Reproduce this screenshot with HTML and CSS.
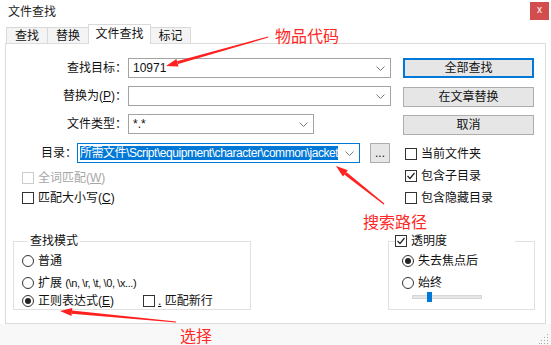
FILE: index.html
```html
<!DOCTYPE html>
<html>
<head>
<meta charset="utf-8">
<title>文件查找</title>
<link rel="stylesheet" href="styles.css">
</head>
<body>
<div class="dialog">
  <div class="titlebar">
    <span class="title">文件查找</span>
    <span class="close">x</span>
  </div>
  <div class="tabs">
    <span class="tab w41">查找</span>
    <span class="tab w41">替换</span>
    <span class="tab active">文件查找</span>
    <span class="tab w40">标记</span>
  </div>
  <div class="panel">
    <div class="top">
      <div class="form">
        <span class="lbl">查找目标：</span>
        <div class="combo"><span class="val">10971</span><svg class="chev" width="9" height="5" viewBox="0 0 9 5"><polyline points="0.5,0.5 4.5,4.5 8.5,0.5"/></svg></div>
        <span class="lbl">替换为(<u>P</u>)：</span>
        <div class="combo"><svg class="chev" width="9" height="5" viewBox="0 0 9 5"><polyline points="0.5,0.5 4.5,4.5 8.5,0.5"/></svg></div>
        <span class="lbl">文件类型：</span>
        <div class="combo short"><span class="val">*.*</span><svg class="chev" width="9" height="5" viewBox="0 0 9 5"><polyline points="0.5,0.5 4.5,4.5 8.5,0.5"/></svg></div>
      </div>
      <div class="buttons">
        <div class="btn default">全部查找</div>
        <div class="btn">在文章替换</div>
        <div class="btn">取消</div>
      </div>
    </div>
    <div class="mid">
      <div class="mid-left">
        <div class="dirrow">
          <span class="dirlbl">目录：</span>
          <div class="combo dir"><span class="sel">所需文件\Script\equipment\character\common\jacket</span><svg class="chev" width="9" height="5" viewBox="0 0 9 5"><polyline points="0.5,0.5 4.5,4.5 8.5,0.5"/></svg></div>
          <div class="browse">...</div>
        </div>
        <div class="chk disabled first"><span class="box"></span><span>全词匹配(<u>W</u>)</span></div>
        <div class="chk second"><span class="box"></span><span>匹配大小写(<u>C</u>)</span></div>
      </div>
      <div class="mid-right">
        <div class="chk"><span class="box"></span><span>当前文件夹</span></div>
        <div class="chk"><span class="box"><svg width="10" height="10" viewBox="0 0 10 10"><polyline points="1.5,5 4,7.5 8.5,2"/></svg></span><span>包含子目录</span></div>
        <div class="chk"><span class="box"></span><span>包含隐藏目录</span></div>
      </div>
    </div>
    <div class="bottom">
      <fieldset class="group mode">
        <legend>查找模式</legend>
        <div class="radio r1"><span class="circle"></span><span>普通</span></div>
        <div class="radio r2"><span class="circle"></span><span>扩展 <span class="lat">(\n, \r, \t, \0, \x...)</span></span></div>
        <div class="regexrow">
          <div class="radio wide"><span class="circle on"></span><span>正则表达式(<u>E</u>)</span></div>
          <div class="chk nl"><span class="box"></span><span><u>.</u>&nbsp;匹配新行</span></div>
        </div>
      </fieldset>
      <fieldset class="group trans">
        <legend><span class="chk"><span class="box"><svg width="10" height="10" viewBox="0 0 10 10"><polyline points="1.5,5 4,7.5 8.5,2"/></svg></span><span>透明度</span></span></legend>
        <div class="radio r1"><span class="circle on"></span><span>失去焦点后</span></div>
        <div class="radio r2"><span class="circle"></span><span>始终</span></div>
        <div class="slider"><span class="track"></span><span class="thumb"></span></div>
      </fieldset>
    </div>
  </div>
  <div class="statusbar">
    <svg class="grip" width="10" height="10" viewBox="0 0 10 10">
      <rect x="8" y="0" width="1" height="1"/>
      <rect x="5" y="3" width="1" height="1"/><rect x="8" y="3" width="1" height="1"/>
      <rect x="2" y="6" width="1" height="1"/><rect x="5" y="6" width="1" height="1"/><rect x="8" y="6" width="1" height="1"/>
      <rect x="0" y="9" width="1" height="1"/><rect x="2" y="9" width="1" height="1"/><rect x="5" y="9" width="1" height="1"/><rect x="8" y="9" width="1" height="1"/>
    </svg>
  </div>
</div>

<div class="note n1">物品代码</div>
<div class="note n2">搜索路径</div>
<div class="note n3">选择</div>
<svg class="arrows" width="551" height="345" viewBox="0 0 551 345">
  <polygon points="268,36.5 268.3,37.6 178.1,64.1 176.9,61.3"/>
  <polygon points="166,66 178.6,66.5 176.4,58.9"/>
  <polygon points="384.4,203.6 383.6,204.4 344.2,174.6 346.6,172.3"/>
  <polygon points="336,166 347.9,170.3 342.9,176.6"/>
  <polygon points="176,321.5 176,322.5 71.7,313.8 72,310.4"/>
  <polygon points="60,311 72.3,308.1 71.5,316.1"/>
</svg>
</body>
</html>
```
FILE: styles.css
```css
* { box-sizing: border-box; }
html, body { margin: 0; padding: 0; }
body {
  width: 551px;
  height: 345px;
  overflow: hidden;
  position: relative;
  background: #fff;
  color: #111;
  font-family: "Liberation Sans", "Noto Sans CJK SC", sans-serif;
  font-size: 12px;
  line-height: 16px;
}
u { text-decoration: underline; text-underline-offset: 1px; }

.dialog { width: 551px; height: 345px; display: flex; flex-direction: column; }

.titlebar {
  height: 24px;
  display: flex;
  justify-content: space-between;
  align-items: flex-start;
  padding: 0 2px 0 8px;
}
.title { margin-top: 4px; line-height: 17px; color: #222; }
.close {
  margin-top: 2px;
  width: 19px;
  height: 18px;
  background: #d24d4d;
  color: #fff;
  font-size: 10px;
  line-height: 16px;
  text-align: center;
}

.tabs {
  height: 20px;
  display: flex;
  align-items: flex-end;
  padding-left: 6px;
  position: relative;
  z-index: 1;
}
.tab {
  height: 16px;
  margin-bottom: 1px;
  margin-right: -1px;
  border: 1px solid #d9d9d9;
  border-bottom: none;
  background: #f4f4f4;
  text-align: center;
  line-height: 16px;
  color: #111;
}
.w41 { width: 42px; }
.w40 { width: 41px; }
.tab.active {
  width: 63px;
  height: 20px;
  margin-bottom: 0;
  background: #fff;
  line-height: 18px;
}

.panel {
  margin: -1px 0 0 5px;
  width: 541px;
  height: 281px;
  border: 1px solid #dcdcdc;
  padding-top: 14px;
}

.top { display: flex; align-items: flex-start; }
.form {
  width: 385px;
  display: grid;
  grid-template-columns: 122px 263px;
  grid-auto-rows: 20px;
  row-gap: 8px;
}
.lbl { text-align: right; line-height: 20px; padding-right: 1px; }
.combo {
  height: 20px;
  border: 1px solid #a3a3a3;
  display: flex;
  align-items: center;
  padding-left: 4px;
  background: #fff;
  overflow: hidden;
}
.combo.short { width: 186px; }
.val { line-height: 16px; }
.chev { margin-left: auto; margin-right: 5px; flex: none; }
.chev polyline { fill: none; stroke: #7a7a7a; stroke-width: 1; }

.buttons {
  margin-left: 12px;
  width: 131px;
  display: flex;
  flex-direction: column;
  gap: 8.5px;
}
.btn {
  height: 20px;
  border: 1px solid #adadad;
  background: #e6e6e6;
  text-align: center;
  line-height: 18px;
}
.btn.default { border: 2px solid #0078d7; line-height: 16px; }

.mid { display: flex; margin-top: 8px; }
.mid-left { width: 399px; }
.dirrow { display: flex; align-items: center; height: 20px; }
.dirlbl { width: 71px; text-align: right; padding-right: 0; }
.combo.dir { width: 283px; border-color: #0078d7; padding-left: 2px; }
.sel {
  background: #0078d7;
  color: #fff;
  line-height: 14px;
  white-space: nowrap;
  letter-spacing: -0.46px;
  flex: none;
}
.browse {
  margin-left: 10px;
  width: 20px;
  height: 20px;
  border: 1px solid #adadad;
  background: #e6e6e6;
  text-align: center;
  line-height: 18px;
}

.chk { display: flex; align-items: center; height: 16px; gap: 4px; }
.box {
  width: 12px;
  height: 12px;
  border: 1px solid #333;
  background: #fff;
  flex: none;
  display: flex;
  align-items: center;
  justify-content: center;
}
.box svg polyline { fill: none; stroke: #222; stroke-width: 1.2; }
.mid-left .chk { padding-left: 16px; }
.chk.first { margin-top: 7px; }
.chk.second { margin-top: 4px; }
.chk.disabled { color: #a6a6a6; }
.chk.disabled .box { border-color: #cccccc; }

.mid-right { padding-top: 3px; display: flex; flex-direction: column; gap: 6px; }

.bottom { display: flex; margin-top: 27px; align-items: flex-start; }
.group {
  margin: 0;
  padding: 0;
  border: 1px solid #e0e0e0;
  min-width: 0;
}
.group legend { padding: 0 2px; line-height: 16px; }
.mode { margin-left: 7px; width: 238px; padding: 4px 0 0 8px; height: 77px; }
.mode legend { margin-left: 6px; }
.trans { margin-left: 137px; width: 147px; padding: 4px 0 0 13px; height: 77px; }
.trans legend { margin-left: -7px; padding: 0 68px 0 0; background: #fff; }
.trans legend .chk { gap: 4px; }

.radio { display: flex; align-items: center; height: 16px; gap: 4px; }
.radio.r2 { margin-top: 6px; }
.regexrow { display: flex; margin-top: 2px; }
.radio.wide { width: 121px; }
.chk.nl { gap: 3px; }
.circle {
  width: 12px;
  height: 12px;
  border: 1px solid #333;
  border-radius: 50%;
  background: #fff;
  flex: none;
  display: flex;
  align-items: center;
  justify-content: center;
}
.circle.on::after {
  content: "";
  width: 6px;
  height: 6px;
  border-radius: 50%;
  background: #222;
}
.lat { font-size: 11px; letter-spacing: -0.4px; }

.slider { position: relative; height: 10px; margin-top: 1px; width: 70px; margin-left: 10px; }
.track {
  position: absolute;
  left: 0; right: 0; top: 3px;
  height: 4px;
  background: #e7e7e7;
  border: 1px solid #d6d6d6;
}
.thumb {
  position: absolute;
  left: 15px; top: 0;
  width: 5px; height: 10px;
  background: #0078d7;
}

.statusbar {
  flex: 1;
  background: #f8f8f8;
  display: flex;
  justify-content: flex-end;
  align-items: flex-end;
  padding: 0 2px 1px 0;
}
.grip rect { fill: #a8a8a8; }

.note {
  position: absolute;
  color: #ff2626;
  font-family: "Noto Sans CJK SC", sans-serif;
  font-size: 16px;
  line-height: 16px;
}
.n1 { left: 275px; top: 27px; }
.n2 { left: 363px; top: 213px; }
.n3 { left: 180px; top: 327px; }
.arrows { position: absolute; left: 0; top: 0; pointer-events: none; }
.arrows polygon { fill: #ff2020; }
```
